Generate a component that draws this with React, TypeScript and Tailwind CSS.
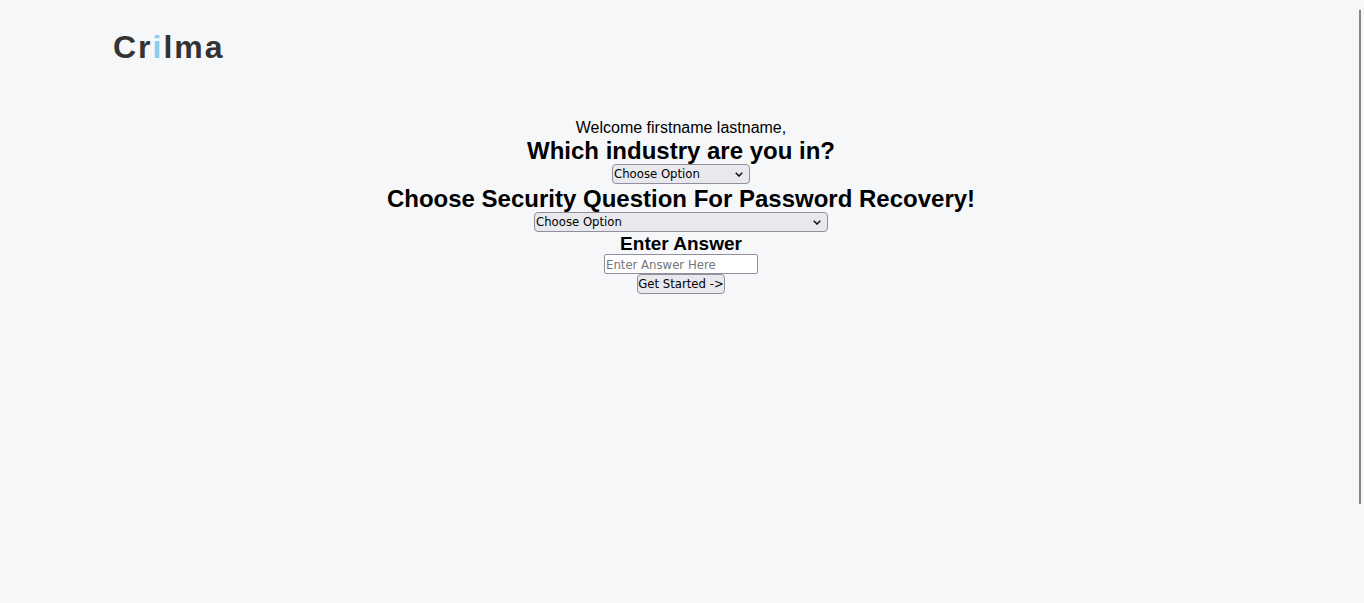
import { useState } from "react";

const industries = ["Technology", "Finance", "Healthcare", "Education"];

const securityQuestions = [
  "What was the name of your first pet?",
  "What city were you born in?",
  "What was the name of your first school?",
];

const fieldText =
  "h-5 border border-[#8f8f9d] text-[13px] leading-[18px] font-['DejaVu_Sans_Condensed',Tahoma,sans-serif]";

const headingText = "pt-0.5 text-2xl leading-[26px] font-bold";

type DropdownProps = {
  id: string;
  options: string[];
  width: string;
};

function Dropdown({ id, options, width }: DropdownProps) {
  const [value, setValue] = useState("");
  return (
    <div className={`grid items-center ${width}`}>
      <select
        id={id}
        value={value}
        onChange={(event) => setValue(event.target.value)}
        className={`col-start-1 row-start-1 w-full appearance-none rounded bg-[#e9e9ed] pl-px text-black ${fieldText}`}
      >
        <option value="">Choose Option</option>
        {options.map((option) => (
          <option key={option}>{option}</option>
        ))}
      </select>
      <svg
        viewBox="0 0 8 5"
        aria-hidden="true"
        className="pointer-events-none col-start-1 row-start-1 mr-[7px] h-[5px] w-2 justify-self-end"
      >
        <path d="M.7.7 4 4 7.3.7" fill="none" stroke="#111" strokeWidth="1.5" />
      </svg>
    </div>
  );
}

export default function App() {
  return (
    <div className="relative min-h-screen bg-[#f5f7f9] pr-0.5 font-['Liberation_Sans',Arial,sans-serif] text-black">
      <header className="px-[113px] pt-[29px]">
        <a href="#" className="inline-block text-[32px] leading-9 font-bold tracking-[2px] text-[#333]">
          Cr<span className="text-[#87ceeb]">i</span>lma
        </a>
      </header>

      <main className="pt-[54px]">
        <form className="flex flex-col items-center text-center" onSubmit={(event) => event.preventDefault()}>
          <p className="text-base leading-[17px]">Welcome firstname lastname,</p>
          <label htmlFor="industry" className={headingText}>
            Which industry are you in?
          </label>
          <Dropdown id="industry" options={industries} width="w-[138px]" />
          <label htmlFor="question" className={headingText}>
            Choose Security Question For Password Recovery!
          </label>
          <Dropdown id="question" options={securityQuestions} width="w-[294px]" />
          <label htmlFor="answer" className="pt-px text-[19px] leading-[21px] font-bold">
            Enter Answer
          </label>
          <input
            id="answer"
            type="text"
            placeholder="Enter Answer Here"
            className={`w-[154px] rounded-[2px] bg-white px-px placeholder:text-[#757575] ${fieldText}`}
          />
          <button type="submit" className={`rounded bg-[#e9e9ed] whitespace-nowrap ${fieldText}`}>
            Get Started -&gt;
          </button>
        </form>
      </main>

      <div aria-hidden="true" className="absolute top-2.5 right-[3px] h-[494px] w-0.5 bg-[#858585]" />
    </div>
  );
}
